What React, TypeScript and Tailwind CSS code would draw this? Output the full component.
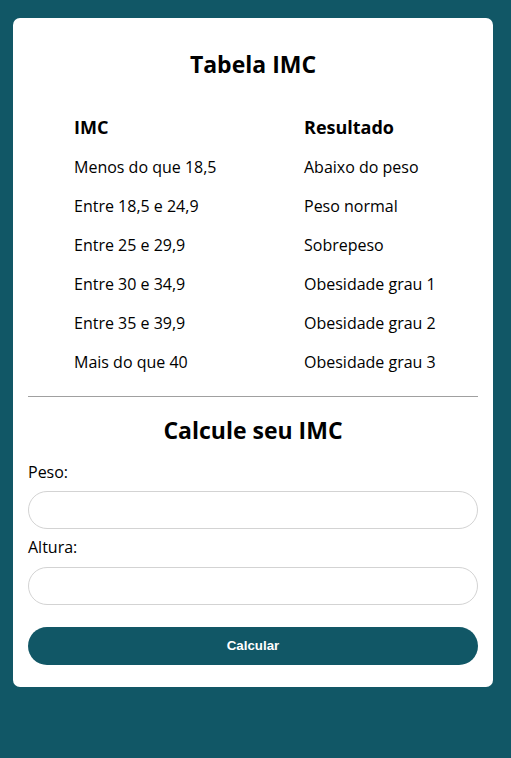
const rows = [
  ['Menos do que 18,5', 'Abaixo do peso'],
  ['Entre 18,5 e 24,9', 'Peso normal'],
  ['Entre 25 e 29,9', 'Sobrepeso'],
  ['Entre 30 e 34,9', 'Obesidade grau 1'],
  ['Entre 35 e 39,9', 'Obesidade grau 2'],
  ['Mais do que 40', 'Obesidade grau 3'],
];

export default function App() {
  return (
    <div className="min-h-[758px] bg-[#115766] pt-[18px] pl-[13px] font-['Open_Sans',sans-serif] text-black">
      <div className="w-[480px] rounded-[7px] bg-white px-[15px] pt-[29px] pb-[22px]">
        <h2 className="text-center text-[23px] leading-[34px] font-bold">Tabela IMC</h2>

        <div className="mt-[27px] pl-[46px]">
          <div className="grid h-[39px] grid-cols-[230px_1fr] items-center text-[18px] font-bold">
            <span>IMC</span>
            <span>Resultado</span>
          </div>
          {rows.map(([imc, res]) => (
            <div key={imc} className="grid h-[39px] grid-cols-[230px_1fr] items-center text-[16px]">
              <span>{imc}</span>
              <span>{res}</span>
            </div>
          ))}
        </div>

        <hr className="mt-[15px] border-0 border-t border-[#a0a0a0]" />

        <h2 className="mt-[16px] text-center text-[23px] leading-[34px] font-bold">Calcule seu IMC</h2>

        <form className="mt-[13px] flex flex-col">
          <label className="text-[16px] leading-[24px]">Peso:</label>
          <input className="mt-[7px] h-[38px] rounded-full border border-[#d3d3d3] px-4 outline-none" />
          <label className="mt-[6px] text-[16px] leading-[24px]">Altura:</label>
          <input className="mt-[8px] h-[38px] rounded-full border border-[#d3d3d3] px-4 outline-none" />
          <button
            type="button"
            className="mt-[22px] h-[38px] rounded-full bg-[#115766] font-['Liberation_Sans',Arial,sans-serif] text-[13.33px] font-bold text-white"
          >
            Calcular
          </button>
        </form>
      </div>
    </div>
  );
}
